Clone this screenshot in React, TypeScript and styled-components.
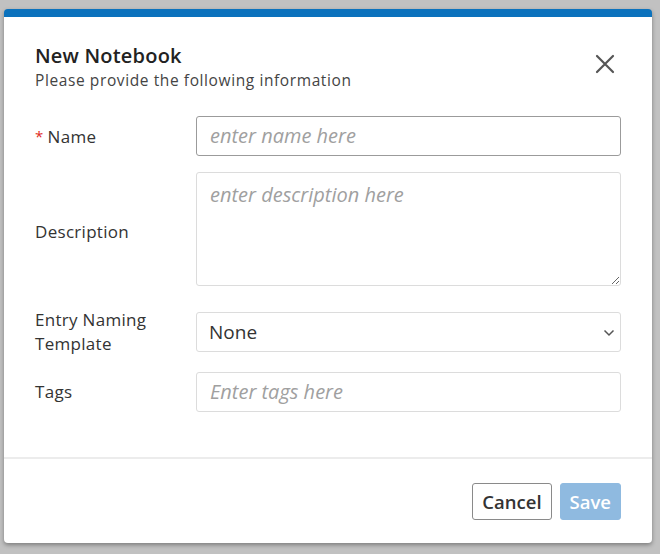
import React from "react";
import styled, { createGlobalStyle } from "styled-components";

const Global = createGlobalStyle`
  html, body { margin: 0; padding: 0; }
  body {
    background: #c1c1c1;
    font-family: "Open Sans", "Noto Sans", "Liberation Sans", sans-serif;
    color: #333;
  }
  * { box-sizing: border-box; }
`;

const Page = styled.div`
  width: 660px;
  height: 554px;
  padding: 9px 8px 0 4px;
`;

const Dialog = styled.div`
  width: 648px;
  height: 534px;
  background: #fff;
  border-top: 8px solid #0b72bd;
  border-radius: 4px;
  box-shadow: 0 2px 4px rgba(0, 0, 0, 0.35);
  display: flex;
  flex-direction: column;
`;

const Header = styled.div`
  display: flex;
  justify-content: space-between;
  align-items: flex-start;
  padding: 26px 36px 0 31px;
`;

const TitleBlock = styled.div`
  display: flex;
  flex-direction: column;
`;

const Title = styled.h2`
  margin: 0;
  font-size: 20px;
  letter-spacing: 0.2px;
  line-height: 26px;
  font-weight: 600;
  color: #222;
`;

const Subtitle = styled.p`
  margin: 0;
  font-size: 15.5px;
  letter-spacing: 0.6px;
  line-height: 22px;
  color: #444;
`;

const CloseButton = styled.button`
  border: none;
  background: transparent;
  padding: 0;
  margin-top: 10px;
  width: 22px;
  height: 22px;
  display: flex;
  align-items: center;
  justify-content: center;
  cursor: pointer;
`;

const Form = styled.div`
  display: flex;
  flex-direction: column;
  gap: 16px;
  padding: 25px 31px 0 31px;
  flex: 1;
`;

const Row = styled.div`
  display: grid;
  grid-template-columns: 161px 1fr;
  align-items: center;
`;

const Label = styled.label`
  font-size: 17px;
  letter-spacing: 0.3px;
  line-height: 24px;
  color: #333;
`;

const Required = styled.span`
  color: #e0281c;
  margin-right: 4px;
  font-size: 15px;
  vertical-align: 1px;
`;

const fieldBase = `
  width: 100%;
  font-family: "Open Sans", "Noto Sans", "Liberation Sans", sans-serif;
  font-size: 19px;
  color: #333;
  background: #fff;
  border-radius: 3px;
  outline: none;
  &::placeholder { color: #a0a0a0; font-style: italic; font-size: 20px; }
`;

const TextInput = styled.input<{ $strong?: boolean }>`
  ${fieldBase}
  height: 40px;
  padding: 0 13px;
  border: 1px solid ${(p) => (p.$strong ? "#9b9b9b" : "#dcdcdc")};
`;

const TextArea = styled.textarea`
  ${fieldBase}
  display: block;
  height: 114px;
  padding: 8px 13px;
  border: 1px solid #dcdcdc;
  margin-bottom: 6px;
  resize: vertical;
`;

const SelectWrap = styled.div`
  position: relative;
`;

const Select = styled.select`
  ${fieldBase}
  height: 40px;
  padding: 0 30px 0 12px;
  border: 1px solid #dcdcdc;
  appearance: none;
  -webkit-appearance: none;
`;

const Chevron = styled.svg`
  position: absolute;
  right: 6px;
  top: 17px;
  pointer-events: none;
`;

const Footer = styled.div`
  border-top: 2px solid #ececec;
  display: flex;
  justify-content: flex-end;
  gap: 8px;
  padding: 24px 31px 23px 0;
`;

const Button = styled.button<{ $primary?: boolean }>`
  height: 37px;
  padding: 0 9px;
  font-family: "Open Sans", "Noto Sans", "Liberation Sans", sans-serif;
  font-size: 18.5px;
  font-weight: 600;
  border-radius: 3px;
  cursor: pointer;
  border: 1px solid ${(p) => (p.$primary ? "#8fbae0" : "#8a8a8a")};
  background: ${(p) => (p.$primary ? "#8fbae0" : "#fff")};
  color: ${(p) => (p.$primary ? "#fff" : "#333")};
`;

export default function App() {
  return (
    <>
      <Global />
      <Page>
        <Dialog>
          <Header>
            <TitleBlock>
              <Title>New Notebook</Title>
              <Subtitle>Please provide the following information</Subtitle>
            </TitleBlock>
            <CloseButton aria-label="Close">
              <svg width="20" height="20" viewBox="0 0 20 20">
                <path d="M2 2 L18 18 M18 2 L2 18" stroke="#555" strokeWidth="2.2" strokeLinecap="round" />
              </svg>
            </CloseButton>
          </Header>
          <Form>
            <Row>
              <Label>
                <Required>*</Required>Name
              </Label>
              <TextInput $strong placeholder="enter name here" />
            </Row>
            <Row>
              <Label>Description</Label>
              <TextArea placeholder="enter description here" />
            </Row>
            <Row>
              <Label>
                Entry Naming
                <br />
                Template
              </Label>
              <SelectWrap>
                <Select defaultValue="none">
                  <option value="none">None</option>
                </Select>
                <Chevron width="12" height="8" viewBox="0 0 12 8">
                  <path d="M1.5 1.5 L6 6 L10.5 1.5" fill="none" stroke="#555" strokeWidth="1.5" />
                </Chevron>
              </SelectWrap>
            </Row>
            <Row>
              <Label>Tags</Label>
              <TextInput placeholder="Enter tags here" />
            </Row>
          </Form>
          <Footer>
            <Button>Cancel</Button>
            <Button $primary>Save</Button>
          </Footer>
        </Dialog>
      </Page>
    </>
  );
}
